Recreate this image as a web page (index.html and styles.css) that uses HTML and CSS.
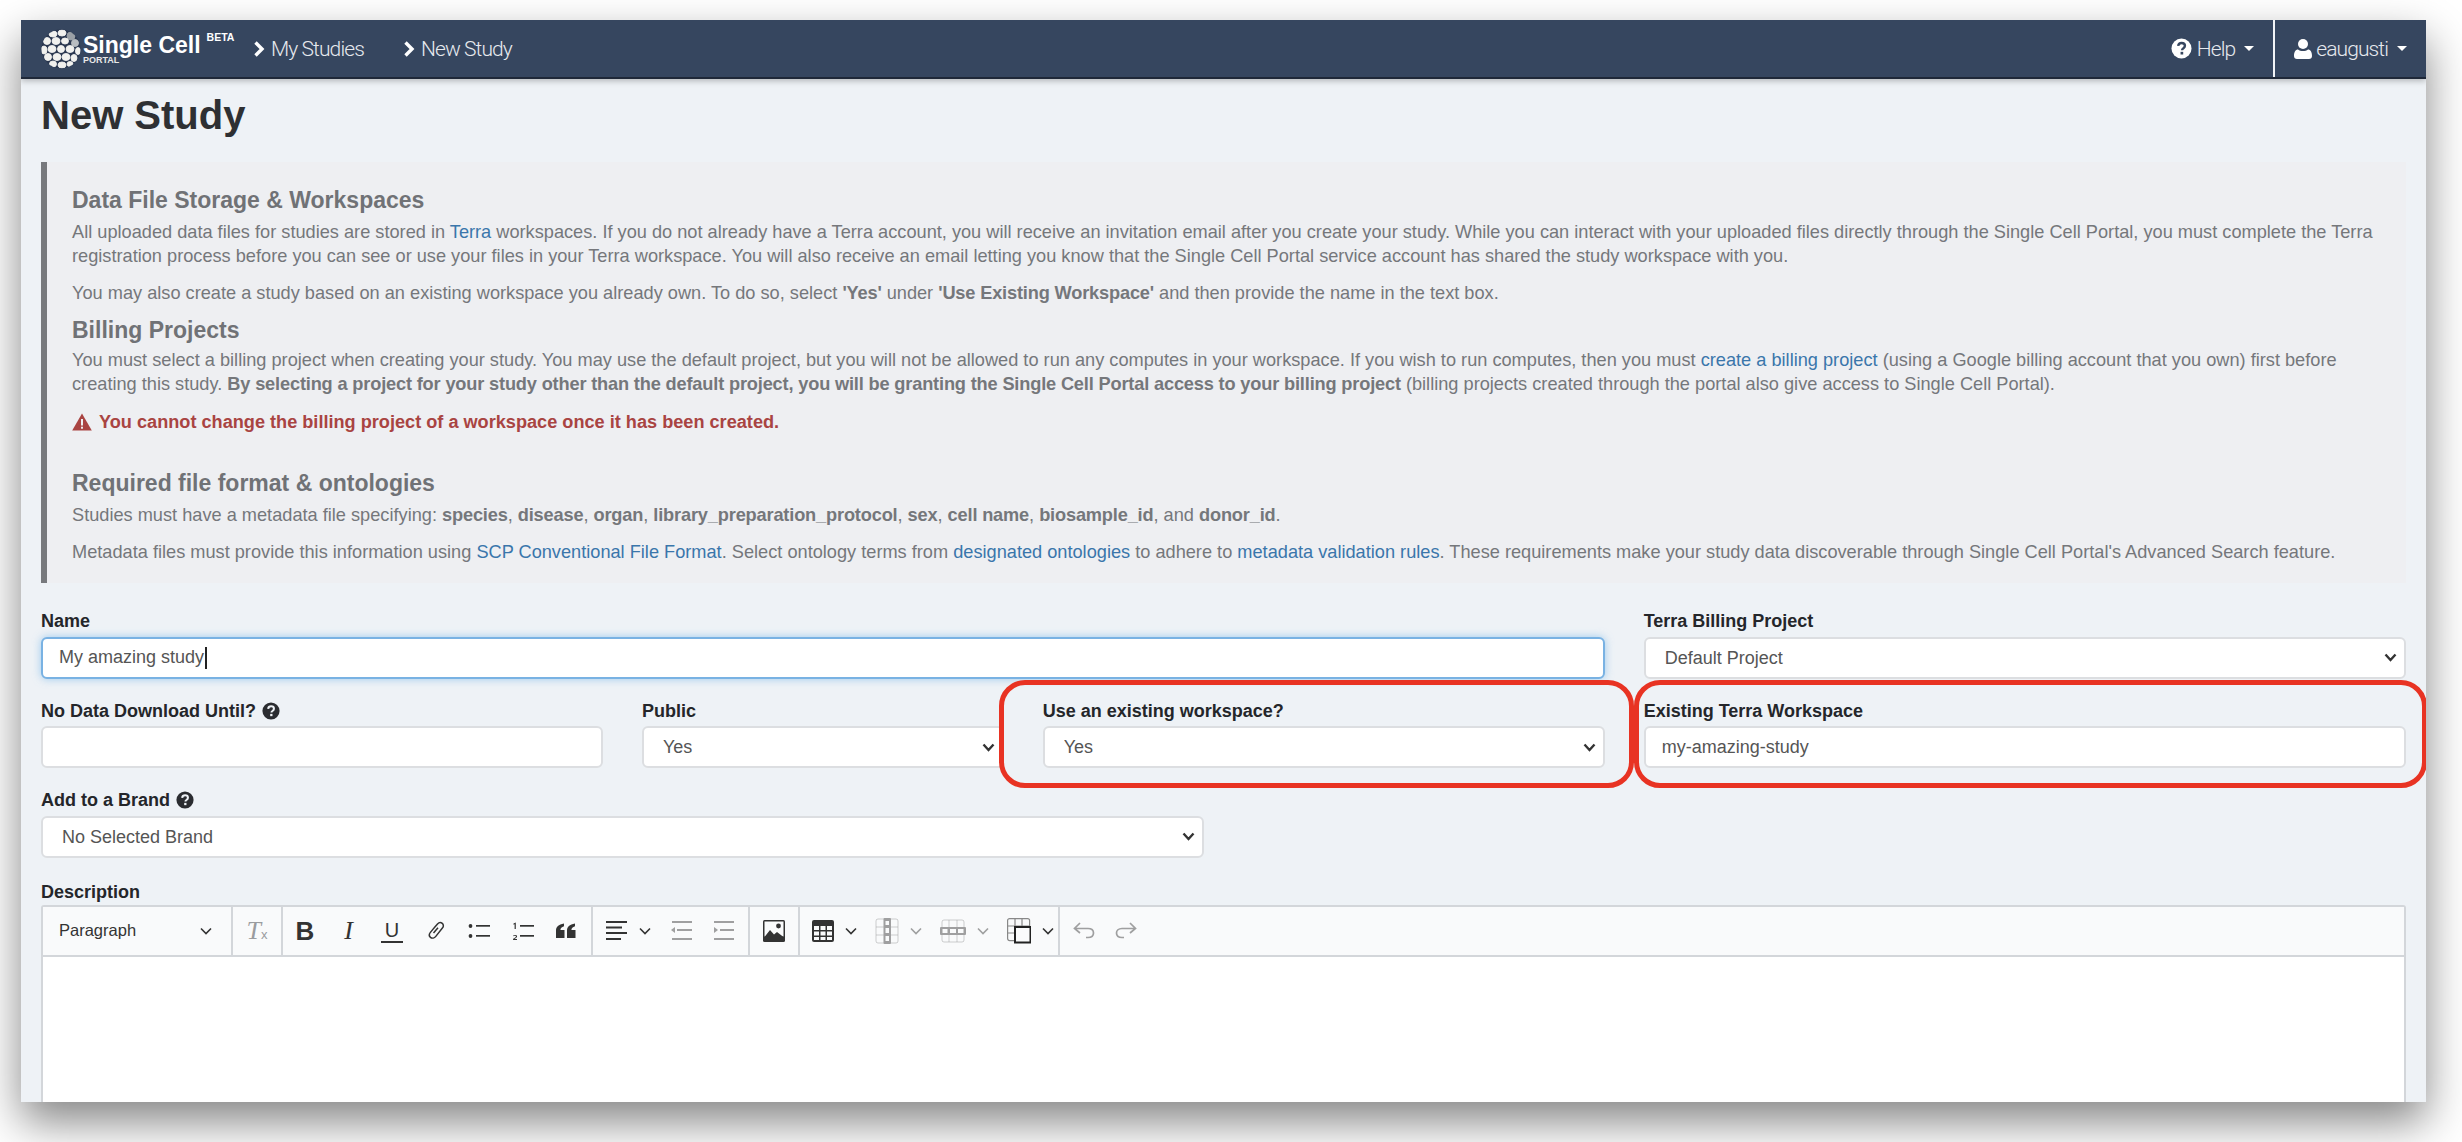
FILE: index.html
```html
<!DOCTYPE html>
<html lang="en">
<head>
<meta charset="utf-8">
<title>New Study</title>
<link rel="stylesheet" href="styles.css">
</head>
<body>
<div class="window">
  <nav class="navbar">
    <a class="brand">
      <svg class="logo" viewBox="0 0 40 40">
        <defs><clipPath id="lc"><circle cx="20" cy="20" r="19.5"/></clipPath></defs>
        <circle cx="20" cy="20" r="19.5" fill="#2b3850"/>
        <g clip-path="url(#lc)" fill="#f1f1ee" stroke="#f1f1ee" stroke-width=".9">
          <ellipse cx="12" cy="5" rx="4" ry="3"/><ellipse cx="21" cy="4" rx="4" ry="3"/><ellipse cx="30" cy="7" rx="4" ry="4" fill="#9aa0a6" stroke="#9aa0a6"/>
          <ellipse cx="6" cy="12" rx="3.5" ry="3.5"/><ellipse cx="15" cy="12" rx="4" ry="3.5"/><ellipse cx="24" cy="12" rx="3.5" ry="3" /><ellipse cx="34" cy="14" rx="3.5" ry="3.5" fill="#b9bdc1" stroke="#b9bdc1"/>
          <ellipse cx="3" cy="21" rx="3" ry="4"/><ellipse cx="11" cy="20" rx="4" ry="3.5"/><ellipse cx="20" cy="20" rx="3.5" ry="3.5"/><ellipse cx="29" cy="20" rx="4" ry="3.5"/><ellipse cx="37" cy="22" rx="2.5" ry="3.5"/>
          <ellipse cx="7" cy="28" rx="3.5" ry="3.5"/><ellipse cx="16" cy="28" rx="4" ry="3.5"/><ellipse cx="25" cy="28" rx="4" ry="3.5"/><ellipse cx="33" cy="29" rx="3" ry="3.5"/>
          <ellipse cx="12" cy="35" rx="3.5" ry="3"/><ellipse cx="21" cy="36" rx="4" ry="3"/><ellipse cx="29" cy="35" rx="3" ry="2.5"/>
        </g>
      </svg>
      <span class="brand-text">
        <span class="brand-name">Single Cell</span>
        <span class="brand-sub">PORTAL</span>
      </span>
      <sup class="brand-beta">BETA</sup>
    </a>
    <a class="crumb">
      <svg class="crumb-chev" viewBox="0 0 12 18"><path d="M2.5 2.5 9 9l-6.500 6.500" fill="none" stroke="#fff" stroke-width="3.400"/></svg>My Studies
    </a>
    <a class="crumb">
      <svg class="crumb-chev" viewBox="0 0 12 18"><path d="M2.500 2.500 9 9l-6.500 6.500" fill="none" stroke="#fff" stroke-width="3.400"/></svg>New Study
    </a>
    <div class="nav-right">
      <a class="nav-item nav-help">
        <svg class="nav-icon" viewBox="0 0 22 22"><circle cx="11" cy="11" r="10.500" fill="#fff"/><path d="M7.500 8.300c.3-2 1.700-3 3.600-3 2 0 3.500 1.100 3.500 2.900 0 1.500-.9 2.100-1.900 2.800-.8.500-1.100.9-1.100 1.800" fill="none" stroke="#36465f" stroke-width="2.500"/><rect x="10" y="14.500" width="2.800" height="2.800" fill="#36465f"/></svg>
        Help<span class="caret"></span>
      </a>
      <a class="nav-item nav-user">
        <svg class="nav-icon user-icon" viewBox="0 0 18 20"><circle cx="9" cy="5" r="5" fill="#fff"/><path d="M0 17c0-4 1.500-6.500 4-6.500 1.300 1 3 1.500 5 1.500s3.700-.5 5-1.500c2.500 0 4 2.500 4 6.500 0 1.800-1.200 3-3 3H3c-1.800 0-3-1.200-3-3z" fill="#fff"/></svg>
        eaugusti<span class="caret"></span>
      </a>
    </div>
  </nav>

  <main class="main">
    <h1 class="title">New Study</h1>

    <section class="panel">
      <h4 class="panel-h">Data File Storage &amp; Workspaces</h4>
      <p class="panel-p">All uploaded data files for studies are stored in <a class="link">Terra</a> workspaces. If you do not already have a Terra account, you will receive an invitation email after you create your study. While you can interact with your uploaded files directly through the Single Cell Portal, you must complete the Terra registration process before you can see or use your files in your Terra workspace. You will also receive an email letting you know that the Single Cell Portal service account has shared the study workspace with you.</p>
      <p class="panel-p gap-p">You may also create a study based on an existing workspace you already own. To do so, select <b>'Yes'</b> under <b>'Use Existing Workspace'</b> and then provide the name in the text box.</p>
      <h4 class="panel-h h-billing">Billing Projects</h4>
      <p class="panel-p p-billing">You must select a billing project when creating your study. You may use the default project, but you will not be allowed to run any computes in your workspace. If you wish to run computes, then you must <a class="link">create a billing project</a> (using a Google billing account that you own) first before creating this study. <b>By selecting a project for your study other than the default project, you will be granting the Single Cell Portal access to your billing project</b> (billing projects created through the portal also give access to Single Cell Portal).</p>
      <p class="panel-p warn">
        <svg class="warn-icon" viewBox="0 0 20 18"><path d="M10 0.500 19.800 17.500H.2z" fill="#a94442"/><rect x="9" y="6" width="2" height="6.500" fill="#eeeff2"/><rect x="9" y="13.700" width="2" height="2" fill="#eeeff2"/></svg>
        You cannot change the billing project of a workspace once it has been created.</p>
      <h4 class="panel-h h-required">Required file format &amp; ontologies</h4>
      <p class="panel-p p-required">Studies must have a metadata file specifying: <b>species</b>, <b>disease</b>, <b>organ</b>, <b>library_preparation_protocol</b>, <b>sex</b>, <b>cell name</b>, <b>biosample_id</b>, and <b>donor_id</b>.</p>
      <p class="panel-p gap-p">Metadata files must provide this information using <a class="link">SCP Conventional File Format</a>. Select ontology terms from <a class="link">designated ontologies</a> to adhere to <a class="link">metadata validation rules</a>. These requirements make your study data discoverable through Single Cell Portal's Advanced Search feature.</p>
    </section>

    <form class="form">
      <div class="field col-8">
        <label class="label" for="name">Name</label>
        <div class="focus-wrap">
          <input class="control focused" id="name" type="text" value="My amazing study">
          <span class="text-caret"></span>
        </div>
      </div>
      <div class="field col-4">
        <label class="label" for="billing">Terra Billing Project</label>
        <select class="control select" id="billing"><option>Default Project</option></select>
      </div>
      <div class="field col-3">
        <label class="label" for="embargo">No Data Download Until?
          <svg class="q-icon" viewBox="0 0 22 22"><circle cx="11" cy="11" r="10.500" fill="#2a2c30"/><path d="M7.500 8.300c.3-2 1.700-3 3.600-3 2 0 3.500 1.100 3.500 2.900 0 1.500-.9 2.100-1.900 2.800-.8.500-1.100.9-1.100 1.800" fill="none" stroke="#eef2f6" stroke-width="2.500"/><rect x="10" y="14.500" width="2.800" height="2.800" fill="#eef2f6"/></svg>
        </label>
        <input class="control" id="embargo" type="text">
      </div>
      <div class="field col-2">
        <label class="label" for="public">Public</label>
        <select class="control select" id="public"><option>Yes</option></select>
      </div>
      <div class="field col-3">
        <label class="label" for="existing">Use an existing workspace?</label>
        <select class="control select" id="existing"><option>Yes</option></select>
      </div>
      <div class="field col-4">
        <label class="label" for="workspace">Existing Terra Workspace</label>
        <input class="control" id="workspace" type="text" value="my-amazing-study">
      </div>
      <div class="field col-6">
        <label class="label" for="brand">Add to a Brand
          <svg class="q-icon" viewBox="0 0 22 22"><circle cx="11" cy="11" r="10.500" fill="#2a2c30"/><path d="M7.500 8.300c.3-2 1.700-3 3.600-3 2 0 3.500 1.100 3.500 2.900 0 1.500-.9 2.100-1.900 2.800-.8.500-1.100.9-1.100 1.800" fill="none" stroke="#eef2f6" stroke-width="2.500"/><rect x="10" y="14.500" width="2.800" height="2.800" fill="#eef2f6"/></svg>
        </label>
        <select class="control select" id="brand"><option>No Selected Brand</option></select>
      </div>
      <div class="field col-12 field-desc">
        <span class="label label-desc">Description</span>
        <div class="editor">
          <div class="toolbar">
            <div class="tb-group tb-para"><span class="tb-para-text">Paragraph</span><svg class="chev" viewBox="0 0 12 8"><path d="M1 1.500 6 6.500l5-5" fill="none" stroke="#333" stroke-width="1.600"/></svg></div>
            <div class="tb-group tb-single"><span class="g-tx">T<small>x</small></span></div>
            <div class="tb-group tb-basic">
              <span class="g g-b">B</span>
              <span class="g g-i">I</span>
              <span class="g g-u">U</span>
              <svg class="ic" viewBox="0 0 22 22"><g fill="none" stroke="#333" stroke-width="1.500"><path d="M8.800 8.200 12.500 3.900c1.400-1.500 3.400-1.700 4.800-.5 1.400 1.200 1.400 3.200.1 4.700l-6.600 8.300c-1.400 1.700-3.700 2.300-5.300 1-1.500-1.300-1.400-3.400-.1-5l3.900-4.800"/><path d="M8.500 13 13 7.800"/></g></svg>
              <svg class="ic" viewBox="0 0 22 22"><g fill="#333"><circle cx="2.500" cy="6" r="1.900"/><circle cx="2.500" cy="16" r="1.900"/><rect x="8" y="5" width="14" height="1.700"/><rect x="8" y="15" width="14" height="1.700"/></g></svg>
              <svg class="ic" viewBox="0 0 22 22"><g fill="#333"><rect x="8" y="5" width="14" height="1.700"/><rect x="8" y="15" width="14" height="1.700"/><path d="M1.500 3.500 3.800 2.500V9H2.600V4.300l-1.100.4zM1 19.500c0-1.300 3-2 3-3 0-.9-1.800-.9-2.600-.2l-.3-.9c1.200-.8 4-.8 4 1.100 0 1.200-2 1.900-2.600 2.500H5v1H1z"/></g></svg>
              <svg class="ic" viewBox="0 0 22 22"><path fill="#333" d="M1 18V10.500C1 7 3.500 4.500 9 3.500v2.700c-2.400.8-3.500 2-3.600 3.800H9.500v8zM12 18V10.500c0-3.500 2.500-6 8-7v2.700c-2.400.8-3.500 2-3.600 3.800h4.100v8z"/></svg>
            </div>
            <div class="tb-group tb-lists">
              <span class="split">
                <svg class="ic" viewBox="0 0 22 22"><g fill="#333"><rect y="1" width="21" height="2"/><rect y="6.500" width="16" height="2"/><rect y="12" width="21" height="2"/><rect y="18" width="15" height="2"/></g></svg>
                <svg class="chev" viewBox="0 0 12 8"><path d="M1 1.500 6 6.500l5-5" fill="none" stroke="#333" stroke-width="1.600"/></svg>
              </span>
              <svg class="ic dim" viewBox="0 0 22 22"><g fill="#333"><rect x="1" y="1" width="20" height="2"/><path d="M0 10l4-3v6z"/><rect x="6" y="9" width="15" height="2"/><rect x="1" y="18" width="20" height="2"/></g></svg>
              <svg class="ic dim" viewBox="0 0 22 22"><g fill="#333"><rect x="1" y="1" width="20" height="2"/><path d="M5 10 1 7v6z"/><rect x="7" y="9" width="14" height="2"/><rect x="1" y="18" width="20" height="2"/></g></svg>
            </div>
            <div class="tb-group tb-single">
              <svg class="ic" viewBox="0 0 22 22"><rect width="22" height="22" rx="1.500" fill="#333"/><rect x="1.500" y="1.500" width="19" height="15" fill="#fafbfc"/><path d="M1.500 17 7 10l4 4.500 3-2.500 6.500 5z" fill="#333"/><circle cx="15.500" cy="6" r="2.400" fill="#333"/></svg>
            </div>
            <div class="tb-group tb-table">
              <span class="split">
                <svg class="ic" viewBox="0 0 22 22"><rect x="0" y="0" width="22" height="22" rx="2" fill="#333"/><path d="M2 6h5v4H2zm6.500 0h5v4h-5zm6.500 0h5v4h-5zM2 11.500h5v4H2zm6.500 0h5v4h-5zm6.500 0h5v4h-5zM2 17h5v3H2zm6.500 0h5v3h-5zm6.500 0h5v3h-5z" fill="#fafbfc"/></svg>
                <svg class="chev" viewBox="0 0 12 8"><path d="M1 1.500 6 6.500l5-5" fill="none" stroke="#333" stroke-width="1.600"/></svg>
              </span>
              <span class="split dim">
                <svg class="ic tall" viewBox="0 0 24 26"><g fill="none" stroke="#333" stroke-width="1"><rect x="1" y="1" width="22" height="24" rx="2" opacity=".5"/><path d="M1 9h22M1 17h22" opacity=".5"/></g><rect x="8.500" y="0" width="7.500" height="26" rx="1" fill="#333"/><path d="M10.500 3h3.500v4h-3.500zm0 7h3.500v5h-3.500zm0 8h3.500v5h-3.500z" fill="#fafbfc"/></svg>
                <svg class="chev" viewBox="0 0 12 8"><path d="M1 1.500 6 6.500l5-5" fill="none" stroke="#333" stroke-width="1.600"/></svg>
              </span>
              <span class="split dim">
                <svg class="ic wide" viewBox="0 0 26 24"><g fill="none" stroke="#333" stroke-width="1"><rect x="2" y="1" width="22" height="22" rx="2" opacity=".5"/><path d="M9 1v22M17 1v22" opacity=".5"/></g><rect x="0" y="8" width="26" height="8" rx="1" fill="#333"/><path d="M2.500 10h5v4h-5zm7.500 0h6v4h-6zm8 0h5.500v4H18z" fill="#fafbfc"/></svg>
                <svg class="chev" viewBox="0 0 12 8"><path d="M1 1.500 6 6.500l5-5" fill="none" stroke="#333" stroke-width="1.600"/></svg>
              </span>
              <span class="split">
                <svg class="ic tall" viewBox="0 0 24 26"><g fill="none" stroke="#888" stroke-width="1.200"><rect x=".6" y=".6" width="22" height="22" rx="2"/><path d="M.6 8h22M.6 15h22M8 .6v22M15 .6v22"/></g><rect x="8" y="9" width="15.500" height="15.500" fill="#fafbfc" stroke="#222" stroke-width="2"/></svg>
                <svg class="chev" viewBox="0 0 12 8"><path d="M1 1.500 6 6.500l5-5" fill="none" stroke="#333" stroke-width="1.600"/></svg>
              </span>
            </div>
            <div class="tb-group tb-history">
              <svg class="ic dim" viewBox="0 0 22 22"><path d="M7 3 1.500 8.500 7 13M2 8.500h13c3.500 0 5.500 2 5.500 4.500s-2 4.500-5.500 4.500h-2" fill="none" stroke="#333" stroke-width="1.700"/></svg>
              <svg class="ic dim" viewBox="0 0 22 22"><path d="M15 3l5.500 5.500L15 13M20 8.500H7c-3.500 0-5.500 2-5.500 4.500s2 4.500 5.500 4.500h2" fill="none" stroke="#333" stroke-width="1.700"/></svg>
            </div>
          </div>
          <div class="editor-body"></div>
        </div>
      </div>
    </form>
    <div class="callout callout-a"></div>
    <div class="callout callout-b"></div>
  </main>
</div>
</body>
</html>
```
FILE: styles.css
```css
* { box-sizing: border-box; }
html, body { margin: 0; height: 1142px; overflow: hidden; background: #fff; }
body { padding: 20px 36px 40px 21px; font-family: "Liberation Sans", Arial, sans-serif; color: #333; }
.window { height: 1082px; background: #eef2f6; overflow: hidden; display: flex; flex-direction: column; position: relative; box-shadow: 0 20px 42px rgba(0,0,0,.48); }

/* navbar */
.navbar { flex: none; height: 59px; background: #36465f; border-bottom: 2px solid #1f2838; box-shadow: 0 2px 6px rgba(0,0,0,.25); display: flex; align-items: center; padding-left: 20px; color: #e6e9ee; font-family: Roboto, sans-serif; font-weight: 300; font-size: 21px; letter-spacing: -.9px; position: relative; z-index: 1; }
.brand { display: flex; align-items: flex-start; color: #fff; width: 212px; height: 40px; }
.logo { width: 40px; height: 40px; flex: none; }
.brand-text { display: flex; flex-direction: column; margin-left: 2px; font-family: "Liberation Sans", sans-serif; font-weight: 700; letter-spacing: 0; }
.brand-name { font-size: 23px; line-height: 26px; margin-top: 3px; }
.brand-sub { font-size: 9px; line-height: 9px; margin-top: -2px; color: #e8e8e8; }
.brand-beta { font-family: "Liberation Sans", sans-serif; font-weight: 700; font-size: 10.500px; letter-spacing: 0; line-height: 12px; margin: 2px 0 0 6px; vertical-align: baseline; }
.crumb { display: flex; align-items: center; margin-right: 39px; }
.crumb-chev { width: 12px; height: 18px; margin-right: 6px; flex: none; }
.nav-right { margin-left: auto; display: flex; align-items: stretch; height: 57px; }
.nav-item { display: flex; align-items: center; }
.nav-help { padding-right: 19px; border-right: 2px solid #f2f4f7; }
.nav-user { padding: 0 19px 0 19px; }
.nav-icon { width: 21px; height: 21px; margin-right: 5px; }
.user-icon { width: 18px; height: 20px; margin-right: 4px; }
.caret { width: 0; height: 0; margin-left: 9px; border-top: 5px solid #fff; border-left: 5px solid transparent; border-right: 5px solid transparent; }

/* main */
.main { flex: 1; padding: 0 20px; position: relative; min-height: 0; }
.title { margin: 14px 0 25px; font-size: 40px; line-height: 44px; font-weight: 700; color: #2e3033; }

.panel { height: 421px; background: #eeeff2; border-left: 6px solid #77797d; padding: 25px 20px 0 25px; color: #75777b; font-size: 18.200px; }
.panel b { letter-spacing: -.16px; }
.panel-h { margin: 0; font-size: 23px; line-height: 26px; font-weight: 700; color: #707276; }
.panel-p { margin: 7px 0 0; line-height: 24px; }
.gap-p { margin-top: 13px; }
.h-billing { margin-top: 12px; }
.p-billing { margin-top: 5px; }
.warn { margin-top: 14px; color: #a94442; font-weight: 700; font-size: 18.150px; display: flex; align-items: center; gap: 7px; }
.warn-icon { width: 20px; height: 18px; flex: none; }
.h-required { margin-top: 36px; }
.link { color: #3a76ab; }

/* form */
.form { display: grid; grid-template-columns: repeat(12, 1fr); column-gap: 39px; row-gap: 22px; margin-top: 28px; }
.field { display: flex; flex-direction: column; min-width: 0; }
.field-desc { margin-top: 2px; }
.col-2 { grid-column: span 2; }
.col-3 { grid-column: span 3; }
.col-4 { grid-column: span 4; }
.col-6 { grid-column: span 6; }
.col-8 { grid-column: span 8; }
.col-12 { grid-column: span 12; }
.label { height: 20px; line-height: 20px; margin-bottom: 5.500px; font-size: 18px; font-weight: 700; color: #24262a; display: flex; align-items: center; gap: 6px; }
.label-desc { margin-bottom: 3px; }
.q-icon { width: 18px; height: 18px; }
.control { width: 100%; height: 42px; background: #fff; border: 2px solid #dcdee1; border-radius: 6px; padding: 0 16px; font: 18px "Liberation Sans", sans-serif; color: #555; outline: 0; }
.focused { border-color: #79b2e3; box-shadow: 0 0 8px rgba(102,175,233,.6); }
.focus-wrap { position: relative; }
.text-caret { position: absolute; left: 164px; top: 10px; width: 1.500px; height: 22px; background: #222; }
.select { appearance: none; padding-left: 19px; background-repeat: no-repeat; background-position: right 7px center; background-size: 13px 9px; background-image: url("data:image/svg+xml,%3Csvg xmlns='http://www.w3.org/2000/svg' viewBox='0 0 13 9'%3E%3Cpath d='M1.500 1.500 6.500 7l5-5.500' fill='none' stroke='%23333' stroke-width='2.400'/%3E%3C/svg%3E"); }

/* editor */
.editor { border: 2px solid #d3d6da; border-radius: 3px 3px 0 0; background: #fff; height: 500px; }
.toolbar { height: 50px; background: #f9fafb; border-bottom: 2px solid #d3d6da; display: flex; align-items: center; }
.tb-group { height: 100%; display: flex; align-items: center; border-right: 2px solid #d3d6da; flex: none; }
.tb-group:last-child { border-right: 0; }
.tb-para { width: 190px; padding: 0 19px 0 16px; justify-content: space-between; }
.tb-para-text { font-size: 16.500px; color: #333; }
.tb-single { width: 50px; justify-content: center; }
.tb-basic { width: 310px; padding-left: 11px; gap: 21.500px; }
.tb-lists { width: 157px; padding-left: 13px; gap: 20px; }
.tb-table { width: 260px; padding-left: 12px; gap: 18px; }
.tb-history { padding-left: 13px; gap: 20px; }
.split { display: flex; align-items: center; gap: 11px; }
.ic { width: 22px; height: 22px; flex: none; }
.tall { width: 24px; height: 26px; }
.wide { width: 26px; height: 24px; }
.chev { width: 12px; height: 8px; flex: none; }
.dim { opacity: .45; }
.g { width: 22px; height: 22px; display: flex; align-items: center; justify-content: center; color: #333; flex: none; line-height: 22px; }
.g-b { font-size: 26px; font-weight: 700; }
.g-i { font: italic 26px "Liberation Serif", serif; }
.g-u { font-size: 20px; border-bottom: 2px solid #333; height: 24px; }
.g-tx { font: italic 26px "Liberation Serif", serif; color: #9a9c9f; line-height: 24px; }
.g-tx small { font: 13px "Liberation Sans", sans-serif; }
.editor-body { height: 440px; }

/* annotations */
.callout { position: absolute; top: 601px; height: 108px; border: 5.500px solid #e83323; border-radius: 26px; pointer-events: none; }
.callout-a { left: 978px; width: 635px; }
.callout-b { left: 1613px; width: 793px; }
```
